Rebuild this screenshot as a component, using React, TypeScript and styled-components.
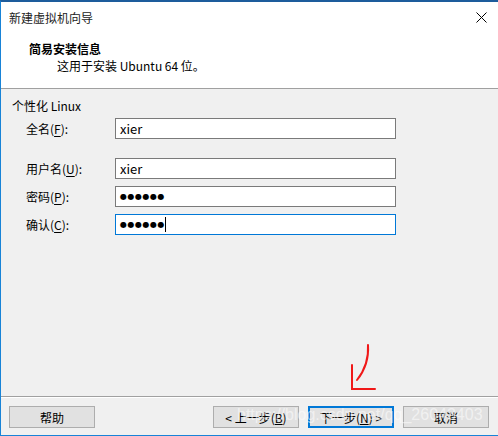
import React from 'react';
import styled, { createGlobalStyle } from 'styled-components';

const GlobalStyle = createGlobalStyle`
  html, body {
    margin: 0;
    padding: 0;
    background: #f0f0f0;
  }
  body {
    font-family: "Segoe UI", "Noto Sans CJK SC", "Noto Sans", sans-serif;
    font-size: 12px;
    color: #000;
  }
`;

const Window = styled.div`
  position: relative;
  width: 498px;
  height: 436px;
  box-sizing: border-box;
  border-top: 2px solid #1d5c9c;
  border-left: 1px solid #1883d7;
  display: flex;
  flex-direction: column;
  overflow: hidden;
  background: #f0f0f0;
`;

const TitleBar = styled.div`
  height: 28px;
  background: #fff;
  display: flex;
  align-items: center;
  justify-content: space-between;
  padding: 0 10px 0 8px;
  box-sizing: border-box;
`;

const Title = styled.span`
  font-size: 12px;
  color: #222;
  margin-top: 2px;
`;

const CloseButton = styled.button`
  border: 0;
  background: transparent;
  padding: 0;
  width: 12px;
  height: 12px;
  display: flex;
  margin-top: 4px;
`;

const Header = styled.div`
  height: 59px;
  background: #fff;
  border-bottom: 1px solid #a0a0a0;
  padding: 10px 0 0 28px;
  box-sizing: border-box;
`;

const HeaderTitle = styled.div`
  font-weight: bold;
  font-size: 12px;
  line-height: 17px;
`;

const HeaderText = styled.div`
  font-size: 12px;
  line-height: 17px;
  padding-left: 28px;
`;

const Body = styled.div`
  flex: 1;
  padding: 8px 0 0 11px;
  box-sizing: border-box;
`;

const GroupLabel = styled.div`
  font-size: 12px;
  line-height: 17px;
`;

const Fields = styled.div`
  display: flex;
  flex-direction: column;
  padding: 4px 0 0 14px;
`;

const FieldRow = styled.div<{ $gap?: number }>`
  display: flex;
  align-items: center;
  margin-top: ${p => p.$gap ?? 0}px;
`;

const Label = styled.label`
  width: 89px;
  font-size: 12px;
  u {
    text-decoration: underline;
    text-underline-offset: 2px;
  }
`;

const Input = styled.div<{ $focused?: boolean }>`
  width: 281px;
  height: 21px;
  box-sizing: border-box;
  background: #fff;
  border: 1px solid ${p => (p.$focused ? '#0078d7' : '#7a7a7a')};
  display: flex;
  align-items: center;
  padding-left: 4px;
  font-size: 13px;
`;

const Dots = styled.span`
  font-family: "DejaVu Sans", sans-serif;
  font-size: 8px;
  letter-spacing: 0.5px;
`;

const Caret = styled.span`
  width: 1px;
  height: 15px;
  background: #000;
`;

const Footer = styled.div`
  height: 40px;
  border-top: 1px solid #a0a0a0;
  box-shadow: inset 0 1px 0 #fff;
  display: flex;
  align-items: flex-start;
  padding: 9px 0 0 8px;
  box-sizing: border-box;
  border-bottom: 1px solid #1883d7;
`;

const Button = styled.button<{ $default?: boolean }>`
  width: 86px;
  height: 22px;
  box-sizing: border-box;
  background: #e1e1e1;
  border: ${p => (p.$default ? '2px solid #0078d7' : '1px solid #adadad')};
  font-family: inherit;
  font-size: 12px;
  color: #000;
  padding: 0;
  margin-right: 9px;
  u {
    text-decoration: underline;
  }
`;

const Spacer = styled.div`
  flex: 1;
`;

const Watermark = styled.div`
  position: absolute;
  left: 236px;
  top: 404px;
  font-family: "Liberation Sans", Arial, sans-serif;
  font-size: 16px;
  color: rgba(255, 255, 255, 0.55);
  pointer-events: none;
  white-space: nowrap;
`;

const Arrow = styled.svg`
  position: absolute;
  left: 344px;
  top: 338px;
  pointer-events: none;
`;

const App = () => (
  <>
    <GlobalStyle />
    <Window>
      <TitleBar>
        <Title>新建虚拟机向导</Title>
        <CloseButton aria-label="关闭">
          <svg width="11" height="11" viewBox="0 0 11 11">
            <path d="M0.5 0.5 L10.5 10.5 M10.5 0.5 L0.5 10.5" stroke="#000" strokeWidth="1" />
          </svg>
        </CloseButton>
      </TitleBar>
      <Header>
        <HeaderTitle>简易安装信息</HeaderTitle>
        <HeaderText>这用于安装 Ubuntu 64 位。</HeaderText>
      </Header>
      <Body>
        <GroupLabel>个性化 Linux</GroupLabel>
        <Fields>
          <FieldRow>
            <Label>全名(<u>F</u>):</Label>
            <Input>xier</Input>
          </FieldRow>
          <FieldRow $gap={19}>
            <Label>用户名(<u>U</u>):</Label>
            <Input>xier</Input>
          </FieldRow>
          <FieldRow $gap={7}>
            <Label>密码(<u>P</u>):</Label>
            <Input>
              <Dots>●●●●●●</Dots>
            </Input>
          </FieldRow>
          <FieldRow $gap={7}>
            <Label>确认(<u>C</u>):</Label>
            <Input $focused>
              <Dots>●●●●●●</Dots>
              <Caret />
            </Input>
          </FieldRow>
        </Fields>
      </Body>
      <Footer>
        <Button>帮助</Button>
        <Spacer />
        <Button>&lt; 上一步(<u>B</u>)</Button>
        <Button $default>下一步(<u>N</u>) &gt;</Button>
        <Button>取消</Button>
      </Footer>
      <Arrow width="36" height="54" viewBox="0 0 36 54">
        <path d="M23 5 C24 20 20 30 12 40" stroke="#f01818" strokeWidth="2" fill="none" strokeLinecap="round" />
        <path d="M7 25 L7 49 L30 49" stroke="#f01818" strokeWidth="2" fill="none" strokeLinecap="round" />
      </Arrow>
      <Watermark>https://blog.csdn.net/qq_26043403</Watermark>
    </Window>
  </>
);

export default App;
